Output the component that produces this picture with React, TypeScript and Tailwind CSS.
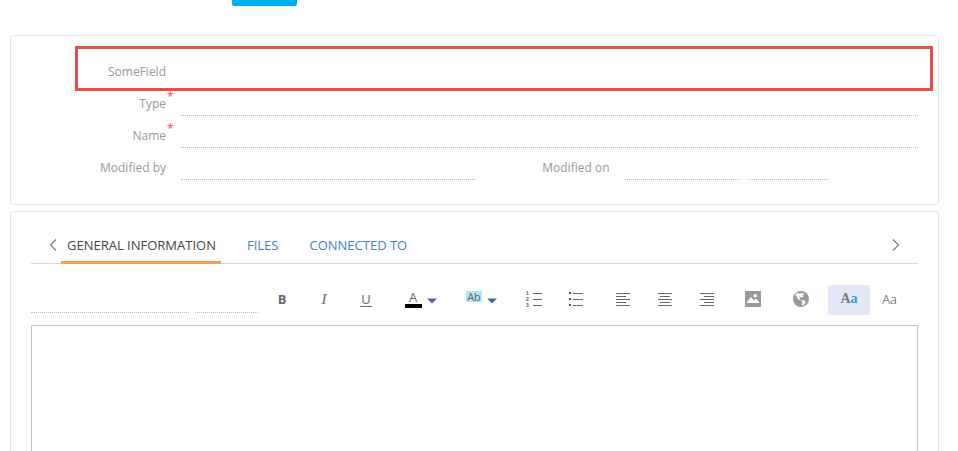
import React, { useState } from "react";

const line = "min-w-0 border-b border-dotted border-[#bdbdbd] bg-transparent outline-none";
const labelText = "relative w-[135px] shrink-0 pt-2 text-right text-xs leading-6 text-[#999]";

function Field({ id, label, required, children }: {
  id: string;
  label: string;
  required?: boolean;
  children?: React.ReactNode;
}) {
  return (
    <div className="flex h-8 gap-[15px]">
      <label htmlFor={id} className={labelText}>
        {label}
        {required && <span className="absolute left-full top-1 pl-px text-xs leading-[18px] text-[#ff3b3b]">*</span>}
      </label>
      {children}
    </div>
  );
}

function Tool({ label, wide, active, children }: {
  label: string;
  wide?: boolean;
  active?: boolean;
  children: React.ReactNode;
}) {
  return (
    <button
      type="button"
      aria-label={label}
      className={`flex h-[30px] shrink-0 items-center justify-center rounded-xs pb-[2px] ${wide ? "w-[61px] gap-[5px] pr-[2px]" : "w-[42px]"} ${active ? "bg-[#e3e8f8]" : ""}`}
    >
      {children}
    </button>
  );
}

function Caret() {
  return (
    <svg width="10" height="6" viewBox="0 0 10 6" className="mt-1" aria-hidden="true">
      <path d="M0 0.5h10L5 5.5z" fill="#4a66a0" />
    </svg>
  );
}

function Lines({ rows }: { rows: [number, number, number][] }) {
  return (
    <>
      {rows.map(([x, y, w]) => (
        <rect key={y} x={x} y={y} width={w} height="1" fill="#666" />
      ))}
    </>
  );
}

function AlignIcon({ inset }: { inset: number }) {
  return (
    <svg width="14" height="16" viewBox="0 0 14 16" aria-hidden="true">
      <Lines rows={[[0, 2, 14], [inset, 5, 10], [0, 8, 14], [inset, 11, 10], [0, 14, 14]]} />
    </svg>
  );
}

function Chevron({ right }: { right?: boolean }) {
  return (
    <svg width="8" height="12" viewBox="0 0 8 12" fill="none" stroke="#777" strokeWidth="1.1" aria-hidden="true">
      <path d={right ? "M1 0.5L6.5 6L1 11.5" : "M7 0.5L1.5 6L7 11.5"} />
    </svg>
  );
}

const tabs = ["GENERAL INFORMATION", "FILES", "CONNECTED TO"];

export default function App() {
  const [tab, setTab] = useState(0);
  return (
    <main className="flex h-screen flex-col overflow-hidden bg-white pl-[10px] pr-[19px] font-['Open_Sans',sans-serif]">
      <div className="h-[35px] shrink-0 pl-[222px]">
        <button type="button" aria-label="Save" className="block h-[6px] w-[65px] rounded-b-xs bg-[#00aeef]" />
      </div>

      <section className="relative shrink-0 rounded-[3px] border border-[#e5e5e5] px-5 pb-6 pt-4">
        <div className="pointer-events-none absolute left-16 right-[5px] top-[10px] h-[45px] border-3 border-[#ec4b46]" />
        <Field id="some" label="SomeField">
          <input id="some" className="min-w-0 flex-1 bg-transparent outline-none" />
        </Field>
        <Field id="type" label="Type" required>
          <input id="type" className={`${line} flex-1`} />
        </Field>
        <Field id="name" label="Name" required>
          <input id="name" className={`${line} flex-1`} />
        </Field>
        <div className="grid grid-cols-2">
          <Field id="by" label="Modified by">
            <input id="by" className={`${line} flex-1`} />
          </Field>
          <Field id="on" label="Modified on">
            <div className="flex gap-2">
              <input id="on" className={`${line} w-[115px]`} />
              <input aria-label="Modified on, time" className={`${line} w-[81px]`} />
            </div>
          </Field>
        </div>
      </section>

      <section className="mt-[6px] flex min-h-0 flex-1 flex-col rounded-t-[3px] border border-b-0 border-[#e5e5e5] px-5">
        <nav className="flex h-[52px] shrink-0 items-end border-b border-[#d8d8d8]">
          <button type="button" aria-label="Previous tabs" className="flex h-9 w-[30px] items-center justify-end pr-1">
            <Chevron />
          </button>
          <div className="-mb-px flex gap-5" role="tablist">
            {tabs.map((name, i) => (
              <button
                key={name}
                type="button"
                role="tab"
                aria-selected={tab === i}
                onClick={() => setTab(i)}
                className={`h-[33px] border-b-3 pb-[3px] pl-[6px] pr-[5px] text-[13px] leading-5 ${tab === i ? "border-[#f59d56] text-[#444]" : "border-transparent text-[#4a7bd0]"}`}
              >
                {name}
              </button>
            ))}
          </div>
          <button type="button" aria-label="Next tabs" className="ml-auto flex h-9 w-[26px] items-center">
            <Chevron right />
          </button>
        </nav>

        <div className="mb-[10px] mt-[21px] flex shrink-0">
          <div className="mr-[3px] flex gap-[6px]">
            <div className={`${line} flex h-7 w-[158px] shrink-0`}>
              <select aria-label="Font" className="w-full appearance-none outline-none" />
            </div>
            <div className={`${line} flex h-7 w-[63px] shrink-0`}>
              <select aria-label="Font size" className="w-full appearance-none outline-none" />
            </div>
          </div>
          <div className="flex text-[#666]">
            <Tool label="Bold"><span className="text-[13px] font-bold leading-5">B</span></Tool>
            <Tool label="Italic"><span className="font-['Liberation_Serif',serif] text-[15px] italic leading-5">I</span></Tool>
            <Tool label="Underline"><span className="border-b border-[#666] px-px text-[13px] leading-[14px]">U</span></Tool>
          </div>
          <div className="ml-1 flex text-[#666]">
            <Tool label="Text color" wide>
              <span className="w-[17px] border-b-4 border-black text-center text-[13px] leading-[14px]">A</span>
              <Caret />
            </Tool>
            <Tool label="Highlight color" wide>
              <span className="mb-[6px] w-4 bg-[#b4e4fa] text-center text-[11px] leading-[11px]">Ab</span>
              <Caret />
            </Tool>
            <Tool label="Numbered list">
              <svg width="16" height="20" viewBox="0 0 16 20" aria-hidden="true">
                <g fill="#555" fontSize="5" fontWeight="700" fontFamily="Liberation Sans, sans-serif">
                  <text x="0" y="6">1</text>
                  <text x="0" y="12">2</text>
                  <text x="0" y="18">3</text>
                </g>
                <Lines rows={[[7, 4, 9], [7, 10, 9], [7, 16, 9]]} />
              </svg>
            </Tool>
            <Tool label="Bulleted list">
              <svg width="14" height="16" viewBox="0 0 14 16" aria-hidden="true">
                <path d="M0 1h2v2H0zM0 7h2v2H0zM0 13h2v2H0z" fill="#555" />
                <Lines rows={[[4, 2, 10], [4, 8, 10], [4, 14, 10]]} />
              </svg>
            </Tool>
          </div>
          <div className="ml-[5px] flex">
            <Tool label="Align left"><AlignIcon inset={0} /></Tool>
            <Tool label="Align center"><AlignIcon inset={2} /></Tool>
            <Tool label="Align right"><AlignIcon inset={4} /></Tool>
          </div>
          <div className="ml-1 flex gap-[6px]">
            <Tool label="Insert image">
              <svg width="16" height="16" viewBox="0 0 16 16" aria-hidden="true">
                <rect width="16" height="16" fill="#999" />
                <circle cx="10.2" cy="4.8" r="1.8" fill="#fff" />
                <path d="M2 12V11L6 6L9 9.5L11 7.5L14 11V12z" fill="#fff" />
              </svg>
            </Tool>
            <Tool label="Insert link">
              <svg width="16" height="16" viewBox="0 0 16 16" aria-hidden="true">
                <circle cx="8" cy="8" r="8" fill="#999" />
                <path d="M2.2 3.5L5 1.8L7 2.8L9.5 2L11.5 3L9.5 4.2L10.8 5.5L8.8 6.5L7.5 6L6.2 7.6L7.8 8.8L6.8 9.2L4.3 7.5L3.2 5z" fill="#fff" />
                <path d="M8.3 9.3L10.5 9L12.7 10.8L11.5 13L9.8 14.8L9 13.8L9.2 11.8z" fill="#fff" />
              </svg>
            </Tool>
            <Tool label="Rich text" active>
              <span className="font-['Liberation_Serif',serif] text-sm font-bold leading-5 text-[#777]">
                A<span className="text-[#2a9fd8]">a</span>
              </span>
            </Tool>
          </div>
          <button type="button" aria-label="Plain text" className="h-[30px] w-[39px] pb-[2px] text-[13px] font-light leading-5 text-[#444]">
            Aa
          </button>
        </div>

        <textarea aria-label="Notes" className="min-h-0 w-full flex-1 resize-none border border-b-0 border-[#c4c4c4] p-2 text-xs outline-none" />
      </section>
    </main>
  );
}
